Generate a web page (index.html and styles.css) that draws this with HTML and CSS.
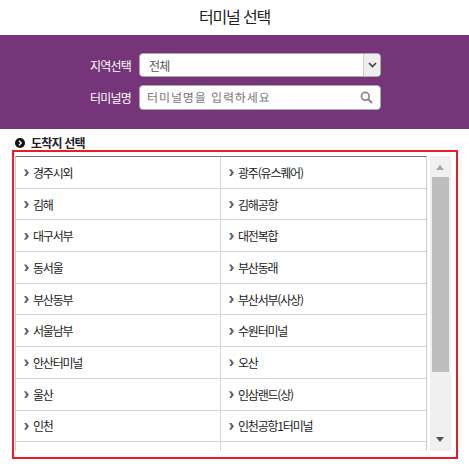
FILE: index.html
```html
<!DOCTYPE html>
<html lang="ko">
<head>
  <meta charset="utf-8">
  <title>터미널 선택</title>
  <link rel="stylesheet" href="styles.css">
</head>
<body>

  <h1 class="title">터미널 선택</h1>

  <div class="search">
    <div class="field">
      <label class="label">지역선택</label>
      <div class="select">
        <span class="select-value">전체</span>
        <span class="select-btn">
          <svg width="9" height="6" viewBox="0 0 9 6"><path d="M1 1l3.5 3.5L8 1" fill="none" stroke="#444" stroke-width="1.7"/></svg>
        </span>
      </div>
    </div>
    <div class="field">
      <label class="label">터미널명</label>
      <div class="input">
        <span class="placeholder">터미널명을 입력하세요</span>
        <svg width="13" height="13" viewBox="0 0 13 13"><circle cx="5.3" cy="5.3" r="3.9" fill="none" stroke="#8a8a8a" stroke-width="1.7"/><path d="M8.2 8.2l3.8 3.8" stroke="#8a8a8a" stroke-width="2.2"/></svg>
      </div>
    </div>
  </div>

  <h2 class="section-title">
    <svg width="10" height="10" viewBox="0 0 10 10"><circle cx="5" cy="5" r="5" fill="#111"/><path d="M4 2.8L6.2 5 4 7.2" fill="none" stroke="#fff" stroke-width="1.4"/></svg>
    도착지 선택
  </h2>

  <div class="box">
    <div class="list">
      <div class="row"><a class="cell">경주시외</a><a class="cell">광주(유스퀘어)</a></div>
      <div class="row"><a class="cell">김해</a><a class="cell">김해공항</a></div>
      <div class="row"><a class="cell">대구서부</a><a class="cell">대전복합</a></div>
      <div class="row"><a class="cell">동서울</a><a class="cell">부산동래</a></div>
      <div class="row"><a class="cell">부산동부</a><a class="cell">부산서부(사상)</a></div>
      <div class="row"><a class="cell">서울남부</a><a class="cell">수원터미널</a></div>
      <div class="row"><a class="cell">안산터미널</a><a class="cell">오산</a></div>
      <div class="row"><a class="cell">울산</a><a class="cell">인삼랜드(상)</a></div>
      <div class="row"><a class="cell">인천</a><a class="cell">인천공항1터미널</a></div>
      <div class="row row-cut"><span class="cell-empty"></span><span class="cell-empty"></span></div>
    </div>
    <div class="scrollbar">
      <span class="arrow-up"></span>
      <span class="thumb"></span>
      <span class="arrow-down"></span>
    </div>
  </div>

</body>
</html>
```

FILE: styles.css
```css
* {
  box-sizing: border-box;
}

body {
  margin: 0;
  font-family: "Noto Sans CJK KR", "Noto Sans", sans-serif;
  color: #222;
  background: #fff;
}

.title {
  margin: 0;
  height: 35px;
  line-height: 33px;
  font-size: 16px;
  font-weight: 400;
  text-align: center;
  letter-spacing: -1.2px;
}

.search {
  height: 94px;
  padding: 18px 88px 0 0;
  background: #763578;
}

.field {
  display: flex;
  justify-content: flex-end;
  align-items: center;
  margin-bottom: 8px;
}

.label {
  margin-right: 8px;
  font-size: 12px;
  letter-spacing: -0.8px;
  color: #fff;
}

.select,
.input {
  display: flex;
  align-items: center;
  width: 242px;
  background: #fff;
  border: 1px solid #aaa;
  border-radius: 4px;
}

.select {
  height: 24px;
  overflow: hidden;
}

.select-value {
  flex: 1;
  padding-left: 9px;
  font-size: 12px;
  letter-spacing: -0.9px;
  color: #555;
}

.select-btn {
  display: flex;
  align-items: center;
  justify-content: center;
  width: 17px;
  height: 100%;
  background: #eee;
  border-left: 1px solid #ccc;
}

.input {
  justify-content: space-between;
  height: 25px;
  padding: 0 7px 0 7px;
}

.placeholder {
  font-size: 12px;
  letter-spacing: 0.9px;
  text-rendering: geometricPrecision;
  color: #777;
}

.section-title {
  display: flex;
  align-items: center;
  gap: 6px;
  margin: 0;
  height: 21px;
  padding: 6px 0 0 15px;
  font-size: 12px;
  font-weight: 700;
  letter-spacing: -0.8px;
  color: #222;
}

.box {
  display: flex;
  width: 446px;
  height: 309px;
  margin: 0 0 0 12px;
  padding: 4px 5px 6px 1px;
  border: 2px solid #ed1c24;
}

.list {
  width: 412px;
  height: 295px;
  overflow: hidden;
  border-top: 1px solid #777;
  border-left: 1px solid #ccc;
  border-right: 1px solid #ccc;
}

.row {
  display: grid;
  grid-template-columns: 205px 1fr;
  height: 31.7px;
  border-bottom: 1px solid #d4d4d4;
}

.row-cut {
  border-bottom: 0;
}

.cell {
  display: flex;
  align-items: center;
  padding-left: 17px;
  font-size: 12px;
  letter-spacing: -1.2px;
  color: #222;
  border-right: 1px solid #d4d4d4;
  position: relative;
}

.cell::before {
  content: "";
  position: absolute;
  left: 8px;
  top: 50%;
  width: 5px;
  height: 7px;
  margin-top: -3px;
  background: #666;
  clip-path: polygon(0 0, 45% 0, 100% 50%, 45% 100%, 0 100%, 45% 50%);
}

.cell:last-child {
  border-right: 0;
}

.cell-empty:first-child {
  border-right: 1px solid #d4d4d4;
}

.scrollbar {
  position: relative;
  width: 21px;
  height: 295px;
  margin-left: 3px;
  background: #f0f0f0;
}

.thumb {
  position: absolute;
  left: 2px;
  top: 21px;
  width: 17px;
  height: 195px;
  background: #bdbdbd;
}

.arrow-up,
.arrow-down {
  position: absolute;
  left: 6px;
  width: 0;
  height: 0;
  border-left: 4.5px solid transparent;
  border-right: 4.5px solid transparent;
}

.arrow-up {
  top: 9px;
  border-bottom: 5px solid #a3a3a3;
}

.arrow-down {
  bottom: 9px;
  border-top: 5px solid #505050;
}
```
